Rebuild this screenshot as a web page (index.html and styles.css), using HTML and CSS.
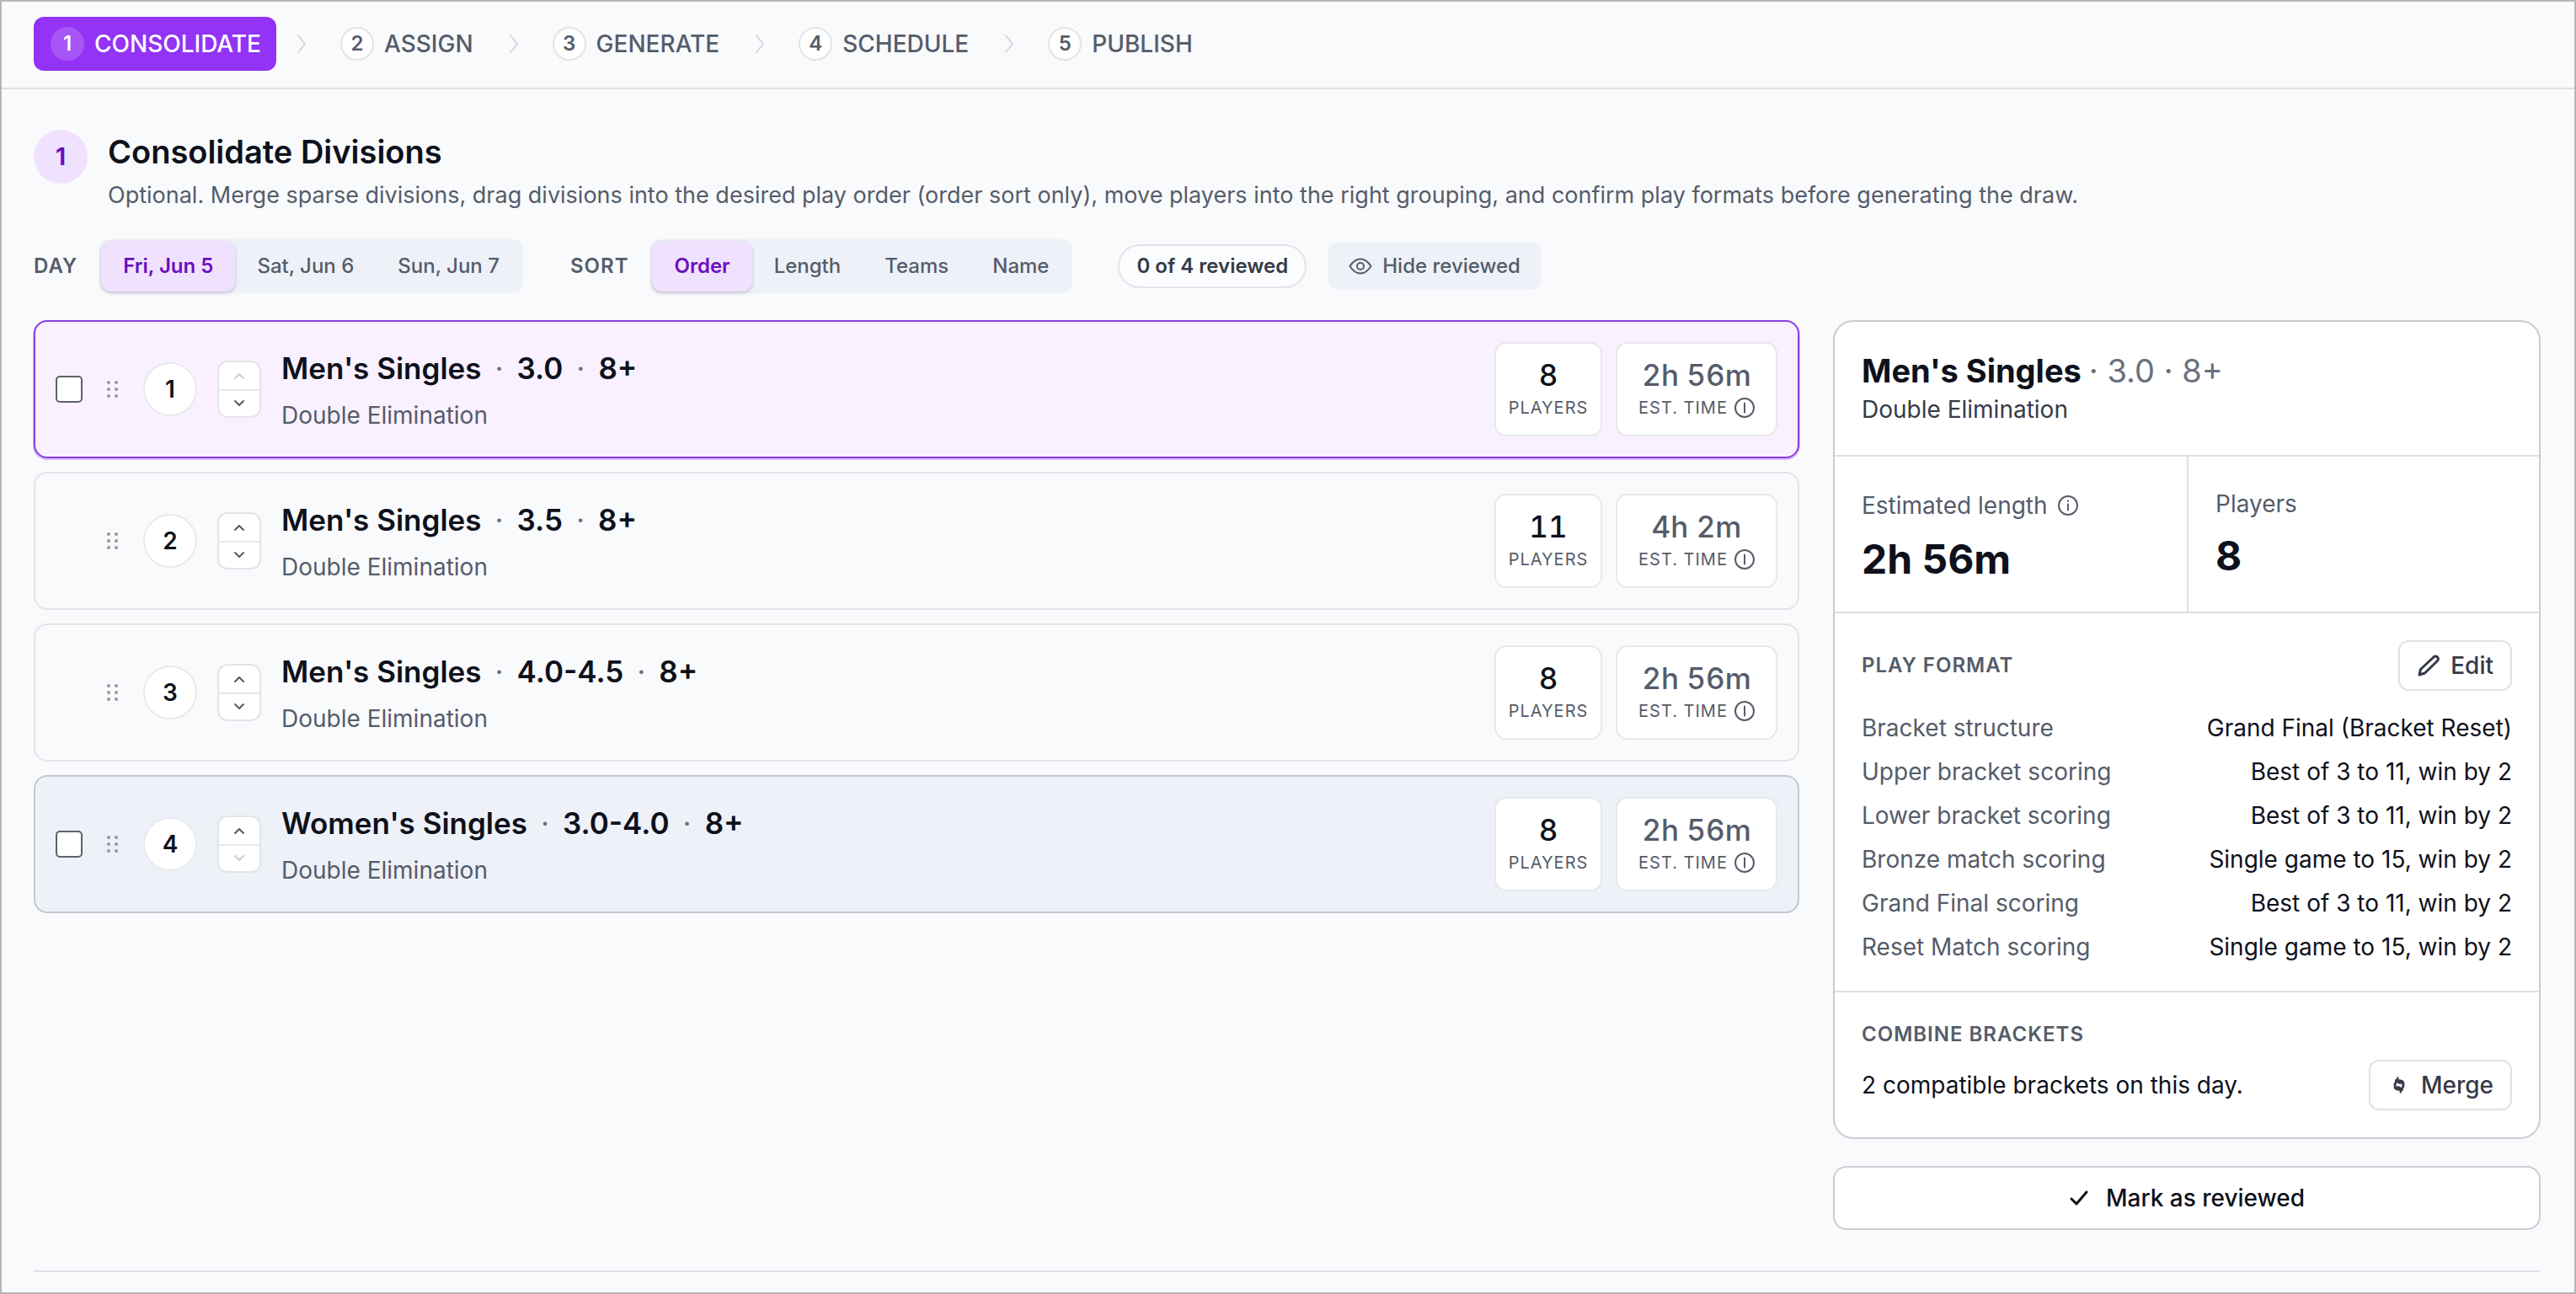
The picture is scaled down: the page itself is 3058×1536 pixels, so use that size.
FILE: index.html
```html
<!DOCTYPE html>
<html lang="en">
<head>
<meta charset="utf-8">
<title>Consolidate Divisions</title>
<link rel="stylesheet" href="styles.css">
</head>
<body>
<svg class="sprite" aria-hidden="true">
  <symbol id="chevron-right" viewBox="0 0 14 24"><path d="M2 2l8 10-8 10"/></symbol>
  <symbol id="chevron-up" viewBox="0 0 16 10"><path d="M3 8l5-5 5 5"/></symbol>
  <symbol id="chevron-down" viewBox="0 0 16 10"><path d="M3 2l5 5 5-5"/></symbol>
  <symbol id="grip" viewBox="0 0 16 22"><circle cx="3" cy="3" r="2"/><circle cx="12" cy="3" r="2"/><circle cx="3" cy="11" r="2"/><circle cx="12" cy="11" r="2"/><circle cx="3" cy="19" r="2"/><circle cx="12" cy="19" r="2"/></symbol>
  <symbol id="info-bar" viewBox="0 0 24 24"><circle cx="12" cy="12" r="11"/><path d="M12 6.500v11"/></symbol>
  <symbol id="info" viewBox="0 0 24 24"><circle cx="12" cy="12" r="11"/><path d="M12 10.500v7M12 6.500v.500"/></symbol>
  <symbol id="eye" viewBox="0 0 28 28"><path d="M1.500 14C5 8.500 9 5.500 14 5.500s9 3 12.500 8.500C23 19.500 19 22.500 14 22.500S5 19.500 1.500 14z"/><circle cx="14" cy="14" r="4"/></symbol>
  <symbol id="pencil" viewBox="0 0 28 28"><path d="M3 25l1.500-6.500L20 4c3.500-2.500 7 1 4.500 4.500L9.500 23z"/></symbol>
  <symbol id="merge" viewBox="0 0 20 24"><circle cx="10" cy="12" r="5" fill="none" stroke="currentColor" stroke-width="3"/><path d="M9 1.500L4.500 7l6 4 6-1.500C16 6.500 13 5 9.500 5.500zM11 22.500l4.500-5.500-6-4-6 1.500c.500 3 3.500 4.500 7 4z"/></symbol>
  <symbol id="check" viewBox="0 0 24 24"><path d="M3 13l6 6L21 5"/></symbol>
</svg>
<div class="app">
  <nav class="steps" aria-label="Steps">
    <a class="step step-active" href="#consolidate"><span class="step-num">1</span>CONSOLIDATE</a>
    <svg class="step-sep"><use href="#chevron-right"/></svg>
    <a class="step" href="#assign"><span class="step-num">2</span>ASSIGN</a>
    <svg class="step-sep"><use href="#chevron-right"/></svg>
    <a class="step" href="#generate"><span class="step-num">3</span>GENERATE</a>
    <svg class="step-sep"><use href="#chevron-right"/></svg>
    <a class="step" href="#schedule"><span class="step-num">4</span>SCHEDULE</a>
    <svg class="step-sep"><use href="#chevron-right"/></svg>
    <a class="step" href="#publish"><span class="step-num">5</span>PUBLISH</a>
  </nav>

  <main class="main" id="consolidate">
    <header class="intro">
      <span class="intro-num">1</span>
      <div>
        <h1 class="intro-title">Consolidate Divisions</h1>
        <p class="intro-text">Optional. Merge sparse divisions, drag divisions into the desired play order (order sort only), move players into the right grouping, and confirm play formats before generating the draw.</p>
      </div>
    </header>

    <div class="toolbar">
      <span class="toolbar-label">DAY</span>
      <div class="segment">
        <button class="segment-item segment-on">Fri, Jun 5</button>
        <button class="segment-item">Sat, Jun 6</button>
        <button class="segment-item">Sun, Jun 7</button>
      </div>
      <span class="toolbar-label toolbar-sort">SORT</span>
      <div class="segment">
        <button class="segment-item segment-on">Order</button>
        <button class="segment-item">Length</button>
        <button class="segment-item">Teams</button>
        <button class="segment-item">Name</button>
      </div>
      <span class="reviewed">0 of 4 reviewed</span>
      <button class="hide"><svg class="icon-eye"><use href="#eye"/></svg>Hide reviewed</button>
    </div>

    <div class="columns">
      <section class="list" aria-label="Divisions">
        <article class="row row-selected">
          <input class="tick" type="checkbox" aria-label="Select Men's Singles 3.0">
          <svg class="grip"><use href="#grip"/></svg>
          <span class="rank">1</span>
          <div class="mover">
            <button class="move" aria-label="Move up" disabled><svg class="chev"><use href="#chevron-up"/></svg></button>
            <button class="move" aria-label="Move down"><svg class="chev"><use href="#chevron-down"/></svg></button>
          </div>
          <div class="info">
            <h2 class="name"><span>Men's Singles</span><i class="dot">·</i><span>3.0</span><i class="dot">·</i><span>8+</span></h2>
            <p class="kind">Double Elimination</p>
          </div>
          <div class="stat"><span class="stat-value">8</span><span class="stat-label">PLAYERS</span></div>
          <div class="stat stat-time"><span class="stat-value">2h 56m</span><span class="stat-label">EST. TIME<svg class="icon-info"><use href="#info-bar"/></svg></span></div>
        </article>

        <article class="row">
          <span class="tick-space"></span>
          <svg class="grip"><use href="#grip"/></svg>
          <span class="rank">2</span>
          <div class="mover">
            <button class="move" aria-label="Move up"><svg class="chev"><use href="#chevron-up"/></svg></button>
            <button class="move" aria-label="Move down"><svg class="chev"><use href="#chevron-down"/></svg></button>
          </div>
          <div class="info">
            <h2 class="name"><span>Men's Singles</span><i class="dot">·</i><span>3.5</span><i class="dot">·</i><span>8+</span></h2>
            <p class="kind">Double Elimination</p>
          </div>
          <div class="stat"><span class="stat-value">11</span><span class="stat-label">PLAYERS</span></div>
          <div class="stat stat-time"><span class="stat-value">4h 2m</span><span class="stat-label">EST. TIME<svg class="icon-info"><use href="#info-bar"/></svg></span></div>
        </article>

        <article class="row">
          <span class="tick-space"></span>
          <svg class="grip"><use href="#grip"/></svg>
          <span class="rank">3</span>
          <div class="mover">
            <button class="move" aria-label="Move up"><svg class="chev"><use href="#chevron-up"/></svg></button>
            <button class="move" aria-label="Move down"><svg class="chev"><use href="#chevron-down"/></svg></button>
          </div>
          <div class="info">
            <h2 class="name"><span>Men's Singles</span><i class="dot">·</i><span>4.0-4.5</span><i class="dot">·</i><span>8+</span></h2>
            <p class="kind">Double Elimination</p>
          </div>
          <div class="stat"><span class="stat-value">8</span><span class="stat-label">PLAYERS</span></div>
          <div class="stat stat-time"><span class="stat-value">2h 56m</span><span class="stat-label">EST. TIME<svg class="icon-info"><use href="#info-bar"/></svg></span></div>
        </article>

        <article class="row row-hover">
          <input class="tick" type="checkbox" aria-label="Select Women's Singles 3.0-4.0">
          <svg class="grip"><use href="#grip"/></svg>
          <span class="rank">4</span>
          <div class="mover">
            <button class="move" aria-label="Move up"><svg class="chev"><use href="#chevron-up"/></svg></button>
            <button class="move" aria-label="Move down" disabled><svg class="chev"><use href="#chevron-down"/></svg></button>
          </div>
          <div class="info">
            <h2 class="name"><span>Women's Singles</span><i class="dot">·</i><span>3.0-4.0</span><i class="dot">·</i><span>8+</span></h2>
            <p class="kind">Double Elimination</p>
          </div>
          <div class="stat"><span class="stat-value">8</span><span class="stat-label">PLAYERS</span></div>
          <div class="stat stat-time"><span class="stat-value">2h 56m</span><span class="stat-label">EST. TIME<svg class="icon-info"><use href="#info-bar"/></svg></span></div>
        </article>
      </section>

      <aside class="side">
        <div class="panel">
          <div class="panel-head">
            <h2 class="panel-title">Men's Singles <span class="panel-meta">· 3.0 · 8+</span></h2>
            <p class="panel-kind">Double Elimination</p>
          </div>
          <div class="facts">
            <div class="fact">
              <p class="fact-label fact-tall">Estimated length<svg class="icon-info"><use href="#info"/></svg></p>
              <p class="fact-value">2h 56m</p>
            </div>
            <div class="fact">
              <p class="fact-label">Players</p>
              <p class="fact-value">8</p>
            </div>
          </div>
          <div class="format">
            <div class="format-head">
              <h3 class="caption">PLAY FORMAT</h3>
              <button class="btn"><svg class="icon-pencil"><use href="#pencil"/></svg>Edit</button>
            </div>
            <dl class="specs">
              <div class="spec"><dt>Bracket structure</dt><dd>Grand Final (Bracket Reset)</dd></div>
              <div class="spec"><dt>Upper bracket scoring</dt><dd>Best of 3 to 11, win by 2</dd></div>
              <div class="spec"><dt>Lower bracket scoring</dt><dd>Best of 3 to 11, win by 2</dd></div>
              <div class="spec"><dt>Bronze match scoring</dt><dd>Single game to 15, win by 2</dd></div>
              <div class="spec"><dt>Grand Final scoring</dt><dd>Best of 3 to 11, win by 2</dd></div>
              <div class="spec"><dt>Reset Match scoring</dt><dd>Single game to 15, win by 2</dd></div>
            </dl>
          </div>
          <div class="combine">
            <h3 class="caption">COMBINE BRACKETS</h3>
            <div class="combine-line">
              <p class="combine-text">2 compatible brackets on this day.</p>
              <button class="btn"><svg class="icon-merge"><use href="#merge"/></svg>Merge</button>
            </div>
          </div>
        </div>
        <button class="mark"><svg class="icon-check"><use href="#check"/></svg>Mark as reviewed</button>
      </aside>
    </div>
    <hr class="rule">
  </main>
</div>
</body>
</html>
```
FILE: styles.css
```css
* { box-sizing: border-box; }
body {
  margin: 0;
  background: #f9fafc;
  color: #0e111b;
  font: 400 28px/36px Inter, "Liberation Sans", sans-serif;
}
h1, h2, h3, p, dl, dd { margin: 0; }
button { font: inherit; color: inherit; border: 0; background: none; padding: 0; }
.sprite { position: absolute; width: 0; height: 0; }
svg { flex: none; fill: none; stroke: currentColor; stroke-linecap: round; stroke-linejoin: round; }

.app { min-height: 100vh; border: 2px solid #b5b6b8; }

.steps {
  display: flex;
  align-items: center;
  padding: 18px 38px 20px;
  border-bottom: 2px solid #dcdfe4;
}
.step {
  display: flex;
  align-items: center;
  gap: 12px;
  height: 64px;
  padding: 0 18px 0 20px;
  border-radius: 12px;
  color: #555c6a;
  font-weight: 500;
  text-decoration: none;
}
.step-active { background: #9333f5; color: #fff; }
.step-num {
  display: grid;
  place-items: center;
  width: 40px;
  height: 40px;
  border: 2px solid #e2e4e9;
  border-radius: 50%;
  background: #fff;
  font-size: 24px;
  font-weight: 600;
}
.step-active .step-num { border-color: #a855f7; background: #a855f7; }
.step-sep { width: 14px; height: 24px; margin: 0 18px 0 24px; color: #d3d6dc; stroke-width: 2; }

.main { padding: 48px 40px 24px 38px; }
.intro { display: flex; gap: 24px; }
.intro-num {
  display: grid;
  place-items: center;
  flex: none;
  width: 64px;
  height: 64px;
  border-radius: 50%;
  background: #f0e2ff;
  color: #6b0fc0;
  font-weight: 700;
}
.intro-title { font-size: 38px; line-height: 52px; font-weight: 600; }
.intro-text { margin-top: 8px; font-size: 27px; color: #555c6a; }

.toolbar { display: flex; align-items: center; margin-top: 34px; font-size: 24px; font-weight: 500; color: #555c6a; }
.toolbar-label { margin-right: 26px; font-weight: 600; letter-spacing: 1px; }
.toolbar-sort { margin-left: 56px; }
.segment { display: flex; padding: 2px; border-radius: 12px; background: #eef1f7; }
.segment-item { height: 60px; padding: 0 26px; border-radius: 12px; }
.segment-on { background: #f0e2ff; color: #6b0fc0; font-weight: 600; box-shadow: 0 2px 4px #1b103033; }
.reviewed {
  margin-left: 54px;
  padding: 6px 20px;
  border: 2px solid #e2e4e9;
  border-radius: 28px;
  background: #fbfcfe;
  color: #353b47;
  font-weight: 600;
}
.hide { display: flex; align-items: center; gap: 12px; height: 56px; margin-left: 26px; padding: 0 24px; border-radius: 10px; background: #eef1f7; }
.icon-eye { width: 28px; height: 28px; stroke-width: 2; }

.columns { display: grid; grid-template-columns: minmax(0, 2096fr) minmax(0, 840fr); gap: 40px; align-items: start; margin-top: 32px; }
.list { display: grid; gap: 16px; }
.row {
  display: flex;
  align-items: center;
  height: 164px;
  padding: 0 24px;
  border: 2px solid #e2e4e9;
  border-radius: 16px;
}
.row-selected { border-color: #8f3fe0; background: #f9f1ff; box-shadow: 0 1px 0 1px #d9b8fa; }
.row-hover { border-color: #c3c8d0; background: #eef1f8; }
.tick { appearance: none; flex: none; width: 32px; height: 32px; margin: 0; border: 2px solid #5d616b; border-radius: 5px; background: #fff; }
.tick-space { flex: none; width: 32px; }
.grip { width: 16px; height: 22px; margin: 0 28px; fill: #9296a0; stroke: none; }
.rank {
  display: grid;
  place-items: center;
  flex: none;
  width: 64px;
  height: 64px;
  border: 2px solid #e8eaee;
  border-radius: 50%;
  background: #fff;
  font-weight: 600;
}
.mover { flex: none; width: 52px; margin: 0 24px; border: 2px solid #e2e4e9; border-radius: 12px; background: #fff; }
.move { display: grid; place-items: center; width: 100%; height: 32px; color: #555960; }
.move + .move { border-top: 2px solid #e6e8ec; }
.move:disabled { color: #cbced4; }
.chev { width: 16px; height: 10px; stroke-width: 2; }
.info { flex: 1; }
.name { display: flex; gap: 16px; font-size: 35px; line-height: 48px; font-weight: 600; }
.dot { color: #6a707d; font-style: normal; font-weight: 400; }
.kind { margin-top: 14px; color: #555c6a; }
.stat {
  display: flex;
  flex-direction: column;
  align-items: center;
  width: 128px;
  height: 112px;
  padding-top: 14px;
  border: 2px solid #e6e8ec;
  border-radius: 14px;
  background: #fff;
}
.stat-time { width: 192px; margin-left: 16px; }
.stat-value { font-size: 35px; line-height: 46px; font-weight: 500; font-variant-numeric: tabular-nums; }
.stat-time .stat-value { color: #555c6a; }
.stat-label { display: flex; align-items: center; gap: 8px; font-size: 20px; line-height: 32px; letter-spacing: 1px; color: #555c6a; }
.icon-info { width: 24px; height: 24px; stroke-width: 2; }

.side { display: grid; gap: 32px; }
.panel { border: 2px solid #c9cdd4; border-radius: 24px; background: #fff; }
.panel-head { padding: 34px 32px 36px; border-bottom: 2px solid #dcdfe4; }
.panel-title { font-size: 38px; line-height: 48px; font-weight: 700; }
.panel-meta { color: #6a707d; font-weight: 400; }
.panel-kind { margin-top: 4px; color: #353b47; }
.facts { display: grid; grid-template-columns: 1fr 1fr; border-bottom: 2px solid #dcdfe4; }
.fact { height: 184px; padding: 38px 32px; }
.fact + .fact { border-left: 2px solid #dcdfe4; }
.fact-label { display: flex; align-items: center; gap: 12px; color: #555c6a; }
.fact-tall { line-height: 40px; }
.fact-value { margin-top: 14px; font-size: 48px; line-height: 60px; font-weight: 700; }
.format { padding: 32px 32px 34px; border-bottom: 2px solid #dcdfe4; }
.format-head, .combine-line, .spec { display: flex; align-items: center; justify-content: space-between; }
.caption { font-size: 24px; font-weight: 600; letter-spacing: 1px; color: #555c6a; }
.btn {
  display: flex;
  align-items: center;
  gap: 12px;
  height: 60px;
  padding: 0 20px;
  border: 2px solid #dfe2e7;
  border-radius: 12px;
  color: #353b47;
  font-weight: 500;
}
.icon-pencil { width: 28px; height: 28px; stroke-width: 3; }
.icon-merge { width: 20px; height: 24px; margin: 0 4px; fill: currentColor; stroke: none; }
.specs { display: grid; gap: 16px; margin-top: 26px; }
.spec dt { color: #555c6a; }
.combine { padding: 32px; }
.combine-line { margin-top: 12px; }
.mark {
  display: flex;
  align-items: center;
  justify-content: center;
  gap: 20px;
  height: 76px;
  border: 2px solid #c9cdd4;
  border-radius: 16px;
  background: #fff;
  font-weight: 500;
}
.icon-check { width: 24px; height: 24px; stroke-width: 3; }
.rule { margin: 48px 0 0; border: 0; border-top: 2px solid #dfe2e7; }
```
